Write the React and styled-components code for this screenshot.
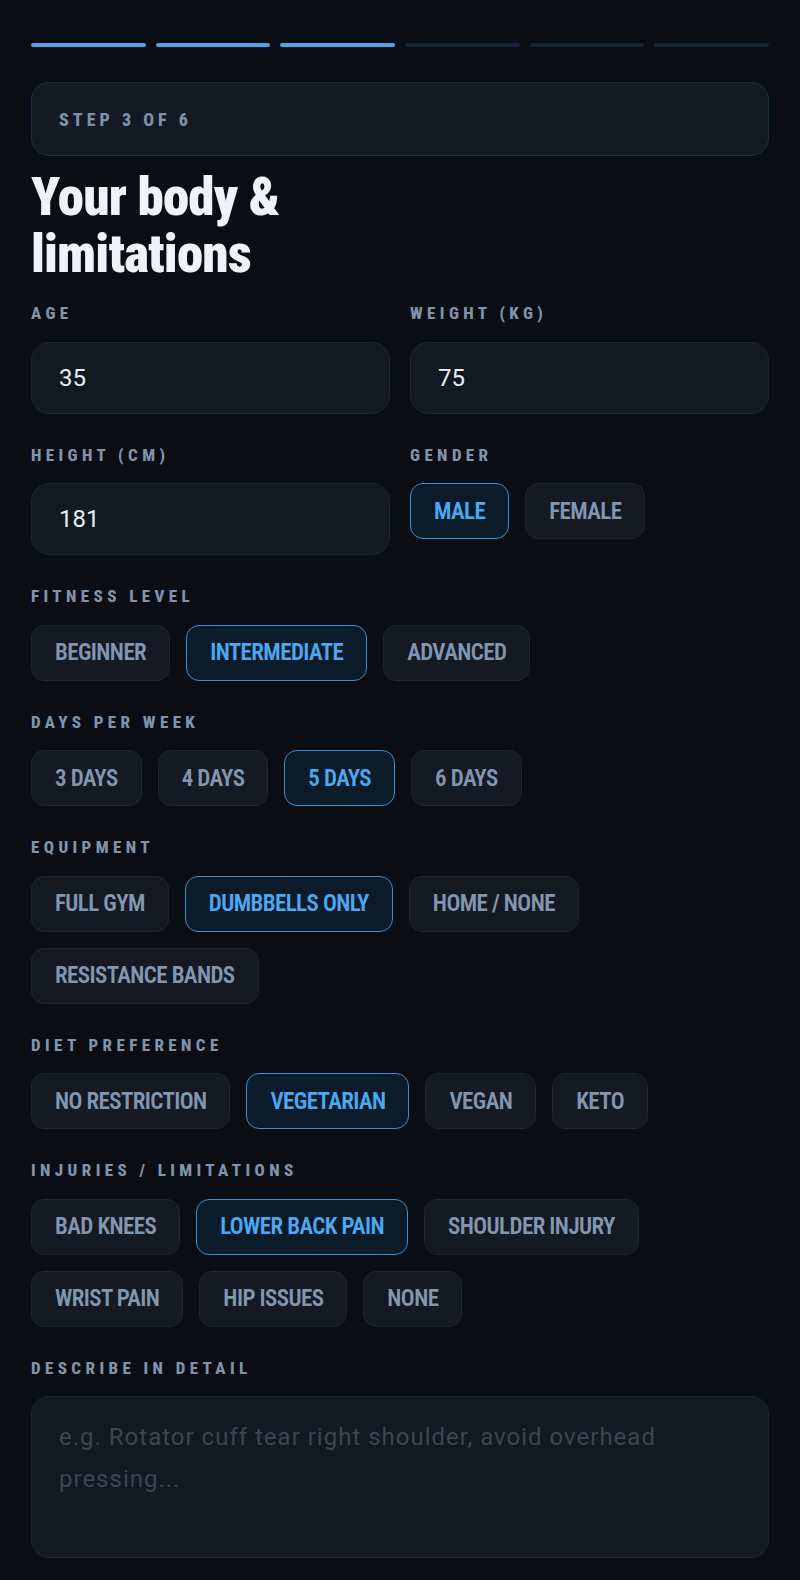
import React from "react";
import styled, { createGlobalStyle } from "styled-components";

const GlobalStyle = createGlobalStyle`
  * { box-sizing: border-box; }
  body {
    margin: 0;
    background: #0a0d13;
    font-family: "Roboto Condensed", "Roboto", "Liberation Sans", sans-serif;
  }
`;

const STEPS = 6;
const CURRENT = 3;

const fitnessLevels = ["BEGINNER", "INTERMEDIATE", "ADVANCED"];
const days = ["3 DAYS", "4 DAYS", "5 DAYS", "6 DAYS"];
const equipment = ["FULL GYM", "DUMBBELLS ONLY", "HOME / NONE", "RESISTANCE BANDS"];
const diets = ["NO RESTRICTION", "VEGETARIAN", "VEGAN", "KETO"];
const injuries = [
  "BAD KNEES",
  "LOWER BACK PAIN",
  "SHOULDER INJURY",
  "WRIST PAIN",
  "HIP ISSUES",
  "NONE",
];

function ChipGroup({ options, value, onChange }) {
  return (
    <Chips>
      {options.map((opt) => (
        <Chip key={opt} $active={value === opt} onClick={() => onChange(opt)}>
          {opt}
        </Chip>
      ))}
    </Chips>
  );
}

export default function App() {
  const [age, setAge] = React.useState("35");
  const [weight, setWeight] = React.useState("75");
  const [height, setHeight] = React.useState("181");
  const [gender, setGender] = React.useState("MALE");
  const [level, setLevel] = React.useState("INTERMEDIATE");
  const [perWeek, setPerWeek] = React.useState("5 DAYS");
  const [gear, setGear] = React.useState("DUMBBELLS ONLY");
  const [diet, setDiet] = React.useState("VEGETARIAN");
  const [injury, setInjury] = React.useState("LOWER BACK PAIN");
  const [detail, setDetail] = React.useState("");

  return (
    <>
      <GlobalStyle />
      <Page>
        <Progress>
          {Array.from({ length: STEPS }).map((_, i) => (
            <Segment key={i} $done={i < CURRENT} />
          ))}
        </Progress>

        <StepBox>
          STEP {CURRENT} OF {STEPS}
        </StepBox>

        <Title>Your body &amp; limitations</Title>

        <Form>
          <TwoCols>
            <Field>
              <Label>AGE</Label>
              <Input value={age} onChange={(e) => setAge(e.target.value)} />
            </Field>
            <Field>
              <Label>WEIGHT (KG)</Label>
              <Input value={weight} onChange={(e) => setWeight(e.target.value)} />
            </Field>
          </TwoCols>

          <TwoCols>
            <Field>
              <Label>HEIGHT (CM)</Label>
              <Input value={height} onChange={(e) => setHeight(e.target.value)} />
            </Field>
            <Field>
              <Label>GENDER</Label>
              <ChipGroup options={["MALE", "FEMALE"]} value={gender} onChange={setGender} />
            </Field>
          </TwoCols>

          <Field>
            <Label>FITNESS LEVEL</Label>
            <ChipGroup options={fitnessLevels} value={level} onChange={setLevel} />
          </Field>

          <Field>
            <Label>DAYS PER WEEK</Label>
            <ChipGroup options={days} value={perWeek} onChange={setPerWeek} />
          </Field>

          <Field>
            <Label>EQUIPMENT</Label>
            <ChipGroup options={equipment} value={gear} onChange={setGear} />
          </Field>

          <Field>
            <Label>DIET PREFERENCE</Label>
            <ChipGroup options={diets} value={diet} onChange={setDiet} />
          </Field>

          <Field>
            <Label>INJURIES / LIMITATIONS</Label>
            <ChipGroup options={injuries} value={injury} onChange={setInjury} />
          </Field>

          <Field>
            <Label>DESCRIBE IN DETAIL</Label>
            <TextArea
              value={detail}
              onChange={(e) => setDetail(e.target.value)}
              placeholder="e.g. Rotator cuff tear right shoulder, avoid overhead pressing..."
            />
          </Field>
        </Form>
      </Page>
    </>
  );
}

const Page = styled.div`
  padding: 43px 31px 24px;
  display: flex;
  flex-direction: column;
`;

const Progress = styled.div`
  display: flex;
  gap: 10px;
`;

const Segment = styled.div`
  flex: 1;
  height: 4px;
  border-radius: 2px;
  background: ${(p) => (p.$done ? "#4ba4ea" : "#13243a")};
`;

const StepBox = styled.div`
  margin-top: 35px;
  height: 74px;
  display: flex;
  align-items: center;
  padding: 0 27px;
  background: #141923;
  border: 1px solid #17304a;
  border-radius: 18px;
  color: #7c91ab;
  font-size: 18px;
  font-weight: 800;
  letter-spacing: 4px;
`;

const Title = styled.h1`
  margin: 13px 0 20px;
  max-width: 320px;
  color: #eef3fb;
  font-size: 53px;
  font-weight: 900;
  line-height: 57px;
  letter-spacing: -0.8px;
`;

const Form = styled.div`
  display: flex;
  flex-direction: column;
  gap: 31px;
`;

const TwoCols = styled.div`
  display: grid;
  grid-template-columns: 1fr 1fr;
  column-gap: 20px;
`;

const Field = styled.div`
  display: flex;
  flex-direction: column;
  gap: 18px;
`;

const Label = styled.div`
  color: #7f93ab;
  font-size: 17px;
  font-weight: 800;
  line-height: 20.5px;
  letter-spacing: 4.4px;
`;

const Input = styled.input`
  width: 100%;
  height: 72px;
  padding: 0 27px;
  background: #131923;
  border: 1px solid #1a2634;
  border-radius: 18px;
  color: #e8eef6;
  font-family: "Roboto", "Liberation Sans", sans-serif;
  font-size: 24px;
  outline: none;
`;

const Chips = styled.div`
  display: flex;
  flex-wrap: wrap;
  gap: 16px;
`;

const Chip = styled.button`
  height: 56px;
  padding: 0 23px;
  border-radius: 13px;
  border: 1px solid ${(p) => (p.$active ? "#3a8ed3" : "#1b2533")};
  background: ${(p) => (p.$active ? "#0b1b2a" : "#141923")};
  color: ${(p) => (p.$active ? "#4ba9f1" : "#8196b0")};
  font-family: inherit;
  font-size: 23px;
  font-weight: 600;
  letter-spacing: -0.6px;
  cursor: pointer;
`;

const TextArea = styled.textarea`
  width: 100%;
  height: 162px;
  padding: 19px 27px;
  resize: none;
  background: #131923;
  border: 1px solid #1a2634;
  border-radius: 18px;
  color: #e8eef6;
  font-family: "Roboto", "Liberation Sans", sans-serif;
  font-size: 24px;
  line-height: 42px;
  letter-spacing: 1px;
  outline: none;

  &::placeholder {
    color: #3a4656;
  }
`;
